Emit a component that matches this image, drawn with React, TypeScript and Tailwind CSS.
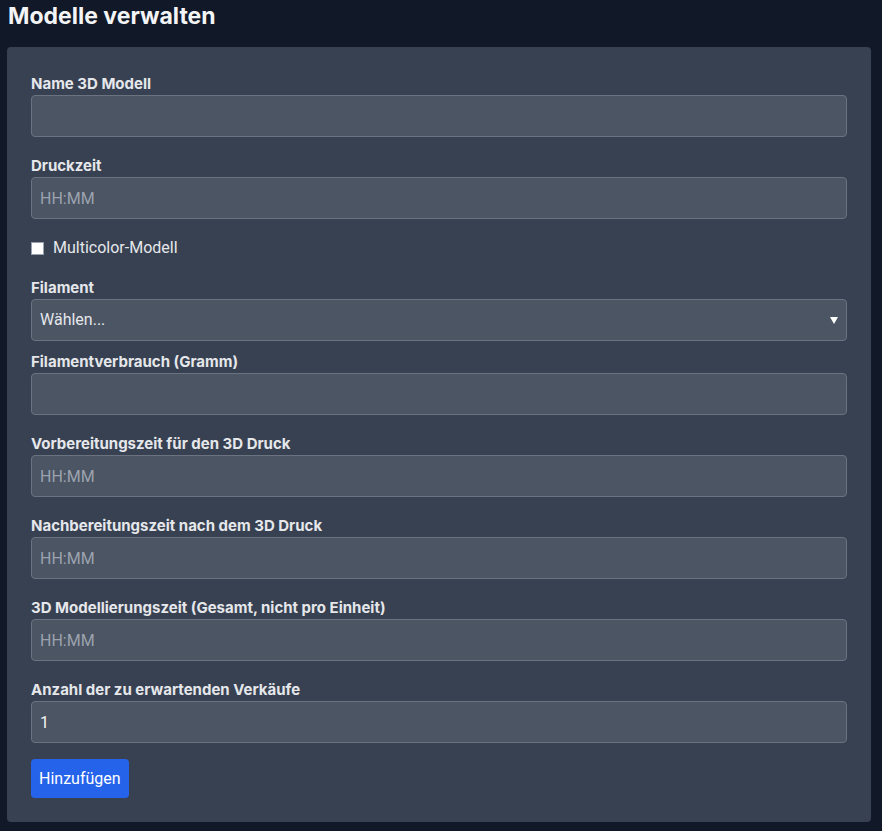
const fields = [
  { label: "Filamentverbrauch (Gramm)", placeholder: "", value: "" },
  { label: "Vorbereitungszeit für den 3D Druck", placeholder: "HH:MM", value: "" },
  { label: "Nachbereitungszeit nach dem 3D Druck", placeholder: "HH:MM", value: "" },
  { label: "3D Modellierungszeit (Gesamt, nicht pro Einheit)", placeholder: "HH:MM", value: "" },
  { label: "Anzahl der zu erwartenden Verkäufe", placeholder: "", value: "1" },
];

const inputClass =
  "block h-[42px] w-full rounded border border-[#6b7280] bg-[#4b5563] px-2 text-base text-[#f3f4f6] placeholder:text-[#9ca3af] font-['Roboto',Arial,sans-serif] outline-none";

const labelClass = "mb-px block text-[15px] leading-5 font-bold text-[#e5e7eb]";

function Field({ label, placeholder, value }: { label: string; placeholder?: string; value?: string }) {
  return (
    <div className="mb-[19px]">
      <label className={labelClass}>{label}</label>
      <input className={inputClass} placeholder={placeholder} defaultValue={value} />
    </div>
  );
}

export default function App() {
  return (
    <div className="min-h-[831px] bg-[#111827] pr-[11px] pl-[7px] font-['Inter','Noto_Sans',sans-serif]">
      <h1 className="mb-[15px] pl-px text-[23px] leading-8 font-bold text-[#f3f4f6]">Modelle verwalten</h1>
      <div className="rounded bg-[#374151] px-6 pt-[27px] pb-6">
        <Field label="Name 3D Modell" />
        <Field label="Druckzeit" placeholder="HH:MM" />

        <div className="mb-5 flex h-5 items-center gap-[9px]">
          <span className="h-[13px] w-[13px] border border-gray-400 bg-white" />
          <span className="font-['Roboto',Arial,sans-serif] text-base text-[#e5e7eb]">Multicolor-Modell</span>
        </div>

        <div className="mb-[11px]">
          <label className={labelClass}>Filament</label>
          <div className="flex h-[42px] w-full items-center justify-between rounded border border-[#6b7280] bg-[#4b5563] pr-[8px] pl-2 font-['Roboto',Arial,sans-serif] text-base text-[#e5e7eb]">
            <span>Wählen...</span>
            <svg width="8" height="7" viewBox="0 0 8 7">
              <path d="M0 0h8L4 7z" fill="#ffffff" />
            </svg>
          </div>
        </div>

        {fields.map((f) => (
          <Field key={f.label} label={f.label} placeholder={f.placeholder} value={f.value} />
        ))}

        <button className="-mt-[3px] h-[39px] rounded bg-[#2563eb] px-2 font-['Roboto',Arial,sans-serif] text-base text-white">
          Hinzufügen
        </button>
      </div>
    </div>
  );
}
